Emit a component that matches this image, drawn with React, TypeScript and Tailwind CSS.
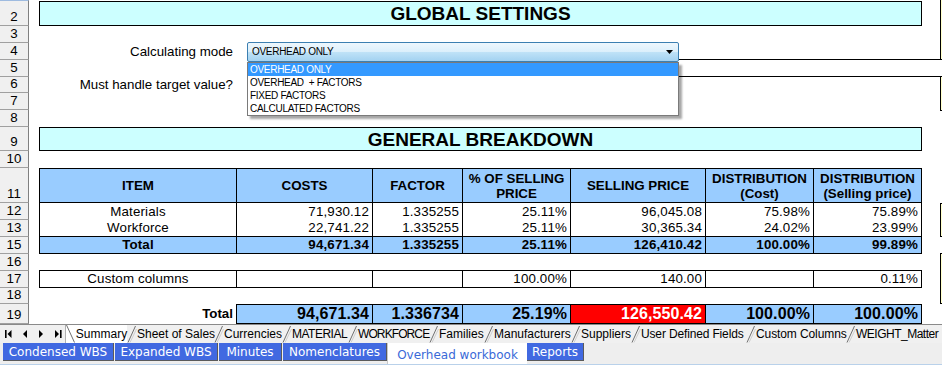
import React from "react";

const W = ["w-[197px]", "w-[136px]", "w-[90px]", "w-[108px]", "w-[135px]", "w-[108px]", "w-[109px]"];

function RowHead({ n, h, top }: { n: string; h: string; top?: boolean }) {
  return (
    <div
      className={`${h} w-[29px] shrink-0 bg-[#f0f0f0] border-r border-r-[#808080] border-b border-b-[#a0a0a0] ${
        top ? "border-t border-t-[#9ebbe0]" : ""
      } flex items-end justify-center pb-px text-[13.33px] leading-[14px]`}
    >
      {n}
    </div>
  );
}

function Row({ n, h, top, children }: { n: string; h: string; top?: boolean; children?: React.ReactNode }) {
  return (
    <div className={`flex ${h}`}>
      <RowHead n={n} h={h} top={top} />
      <div className="flex-1 flex min-w-0">{children}</div>
    </div>
  );
}

type CellProps = { i: number; children?: React.ReactNode; cls?: string; align?: "c" | "r" };

function Cell({ i, children, cls = "", align = "r" }: CellProps) {
  return (
    <div
      className={`${W[i]} shrink-0 h-full border-l border-black ${i === 6 ? "border-r" : ""} flex items-center ${
        align === "c" ? "justify-center text-center" : "justify-end pr-[3px]"
      } whitespace-nowrap ${cls}`}
    >
      {children}
    </div>
  );
}

const dataRows = [
  ["Materials", "71,930.12", "1.335255", "25.11%", "96,045.08", "75.98%", "75.89%"],
  ["Workforce", "22,741.22", "1.335255", "25.11%", "30,365.34", "24.02%", "23.99%"],
];

function Slash() {
  return (
    <svg width="10" height="18" viewBox="0 0 10 18" className="shrink-0">
      <path d="M1 17.5 L8.5 1" stroke="#707070" strokeWidth="1" fill="none" />
      <path d="M3 17.5 L9.5 4" stroke="#cfcfcf" strokeWidth="1" fill="none" />
    </svg>
  );
}

const sheetTabs: { t: string; w: string; c?: string }[] = [
  { t: "Sheet of Sales", w: "w-[77px]" },
  { t: "Currencies", w: "w-[58px]" },
  { t: "MATERIAL", w: "w-[56px]", c: "tracking-[-0.5px]" },
  { t: "WORKFORCE", w: "w-[71px]", c: "tracking-[-0.9px]" },
  { t: "Families", w: "w-[45px]" },
  { t: "Manufacturers", w: "w-[77px]" },
  { t: "Suppliers", w: "w-[50px]" },
  { t: "User Defined Fields", w: "w-[105px]", c: "tracking-[-0.15px]" },
  { t: "Custom Columns", w: "w-[90px]", c: "tracking-[-0.1px]" },
  { t: "WEIGHT_Matter", w: "w-[100px]", c: "tracking-[-0.5px]" },
];

function BlueTab({ t, w }: { t: string; w: string }) {
  return (
    <div
      className={`${w} shrink-0 h-[18px] bg-[#4169e1] text-white border-r border-b border-[#5a5a5a] flex items-center justify-center text-[12px] leading-none font-['DejaVu_Sans',Verdana,sans-serif]`}
    >
      {t}
    </div>
  );
}

export default function App() {
  return (
    <div className="w-[942px] h-[365px] overflow-hidden bg-white text-black font-['Liberation_Sans',Arial,sans-serif] relative">
      <div className="relative">
        <Row n="2" h="h-[26px]" top>
          <div className="ml-[10px] mt-px h-[25px] w-[883px] border border-black bg-[#ccffff] flex items-center justify-center font-bold text-[19px] leading-none">
            GLOBAL SETTINGS
          </div>
        </Row>
        <Row n="3" h="h-[17px]" />
        <Row n="4" h="h-[17px]">
          <div className="w-[204px] text-right text-[13.33px] leading-[17px]">Calculating mode</div>
        </Row>
        <Row n="5" h="h-[17px]">
          <div className="ml-[218px] -mt-px h-[18px] flex-1 border-y border-black" />
        </Row>
        <Row n="6" h="h-[16px]">
          <div className="w-[204px] text-right text-[13.33px] leading-[16px]">Must handle target value?</div>
        </Row>
        <Row n="7" h="h-[17px]" />
        <Row n="8" h="h-[17px]" />
        <Row n="9" h="h-[24px]">
          <div className="ml-[10px] h-[24px] w-[883px] border border-black bg-[#ccffff] flex items-center justify-center font-bold text-[19px] leading-none">
            GENERAL BREAKDOWN
          </div>
        </Row>
        <Row n="10" h="h-[17px]" />
        <Row n="11" h="h-[35px]">
          <div className="ml-[10px] flex h-full border-y border-black bg-[#99ccff] font-bold text-[13.33px] leading-[15px]">
            <Cell i={0} align="c">ITEM</Cell>
            <Cell i={1} align="c">COSTS</Cell>
            <Cell i={2} align="c">FACTOR</Cell>
            <Cell i={3} align="c">
              % OF SELLING
              <br />
              PRICE
            </Cell>
            <Cell i={4} align="c">SELLING PRICE</Cell>
            <Cell i={5} align="c">
              DISTRIBUTION
              <br />
              (Cost)
            </Cell>
            <Cell i={6} align="c">
              DISTRIBUTION
              <br />
              (Selling price)
            </Cell>
          </div>
        </Row>
        {dataRows.map((r, ri) => (
          <Row key={r[0]} n={ri === 0 ? "12" : "13"} h="h-[17px]">
            <div
              className={`ml-[10px] flex h-full text-[13.33px] leading-none tracking-[0.15px] ${
                ri === 1 ? "border-b border-black" : ""
              }`}
            >
              {r.map((v, i) => (
                <Cell key={i} i={i} align={i === 0 ? "c" : "r"}>
                  {v}
                </Cell>
              ))}
            </div>
          </Row>
        ))}
        <Row n="15" h="h-[17px]">
          <div className="ml-[10px] flex h-full border-b border-black bg-[#99ccff] font-bold text-[13.33px] leading-none tracking-[0.15px]">
            {["Total", "94,671.34", "1.335255", "25.11%", "126,410.42", "100.00%", "99.89%"].map((v, i) => (
              <Cell key={i} i={i} align={i === 0 ? "c" : "r"}>
                {v}
              </Cell>
            ))}
          </div>
        </Row>
        <Row n="16" h="h-[17px]" />
        <Row n="17" h="h-[17px]">
          <div className="ml-[10px] -mt-px h-[18px] flex border-y border-black text-[13.33px] leading-none tracking-[0.15px]">
            {["Custom columns", "", "", "100.00%", "140.00", "", "0.11%"].map((v, i) => (
              <Cell key={i} i={i} align={i === 0 ? "c" : "r"}>
                {v}
              </Cell>
            ))}
          </div>
        </Row>
        <Row n="18" h="h-[16px]" />
        <Row n="19" h="h-[20px]">
          <div className="w-[207px] shrink-0 flex items-center justify-end pr-[3px] font-bold text-[13.33px] leading-none">
            Total
          </div>
          <div className="flex h-full border-y border-black font-bold text-[16px] leading-none tracking-[0.1px]">
            {["94,671.34", "1.336734", "25.19%", "126,550.42", "100.00%", "100.00%"].map((v, j) => (
              <Cell key={j} i={j + 1} cls={j === 3 ? "bg-[#ff0000] text-white" : "bg-[#99ccff]"}>
                {v}
              </Cell>
            ))}
          </div>
        </Row>

        {/* comment boxes at right edge */}
        <div className="absolute left-[940px] -top-px h-[61px] w-[20px] border border-black bg-[#ffffc8]" />
        <div className="absolute left-[940px] top-[76px] h-[35px] w-[20px] border border-black bg-[#ffffc8]" />
        <div className="absolute left-[940px] top-[203px] h-[34px] w-[20px] border border-black bg-[#ffffc8]" />
        <div className="absolute left-[940px] top-[253px] h-[51px] w-[20px] border border-black bg-[#ffffc8]" />

        {/* dropdown */}
        <div className="absolute left-[247px] top-[42px] w-[432px] text-[10px] leading-none">
          <div className="relative h-[20px] border border-[#3c7fb1] rounded-[2px] bg-[linear-gradient(to_bottom,#eef7fd_0%,#dbeffb_50%,#bfe2f7_52%,#a3d2f1_100%)] flex items-center pl-[4px]">
            <span className="tracking-[-0.3px]">OVERHEAD ONLY</span>
            <svg className="absolute right-[5px] top-[7px]" width="7" height="4" viewBox="0 0 7 4">
              <path d="M0 0H7L3.5 4Z" fill="#000" />
            </svg>
          </div>
          <div className="h-[54px] border border-[#7a7a7a] bg-white shadow-[3px_3px_2px_rgba(0,0,0,0.35)] flex flex-col tracking-[-0.3px]">
            <div className="h-[13px] bg-[#3399ff] text-white flex items-center pl-[2px]">OVERHEAD ONLY</div>
            <div className="h-[13px] flex items-center pl-[2px] whitespace-pre">OVERHEAD  + FACTORS</div>
            <div className="h-[13px] flex items-center pl-[2px]">FIXED FACTORS</div>
            <div className="h-[13px] flex items-center pl-[2px]">CALCULATED FACTORS</div>
          </div>
        </div>
      </div>

      {/* sheet tabs bar */}
      <div className="h-[19px] flex bg-[#f0f0f0] border-t border-[#8a8a8a] text-[12px] leading-none whitespace-nowrap">
        <div className="w-[66px] shrink-0 h-full flex items-center border-r border-[#b0b0b0]">
          <svg className="ml-[5px]" width="7" height="8" viewBox="0 0 7 8">
            <path d="M0 0H1.6V8H0Z M6.5 0V8L2.5 4Z" fill="#000" />
          </svg>
          <svg className="ml-[11px]" width="4" height="8" viewBox="0 0 4 8">
            <path d="M4 0V8L0 4Z" fill="#000" />
          </svg>
          <svg className="ml-[12px]" width="4" height="8" viewBox="0 0 4 8">
            <path d="M0 0V8L4 4Z" fill="#000" />
          </svg>
          <svg className="ml-[12px]" width="7" height="8" viewBox="0 0 7 8">
            <path d="M0 0V8L4 4Z M5 0H6.6V8H5Z" fill="#000" />
          </svg>
        </div>
        <div className="flex h-full bg-white">
          <svg width="10" height="18" viewBox="0 0 10 18" className="shrink-0">
            <path d="M0.5 0 L8.5 17.5" stroke="#707070" strokeWidth="1" fill="none" />
          </svg>
          <div className="w-[51px] shrink-0 flex items-center justify-center">Summary</div>
        </div>
        {sheetTabs.map((s) => (
          <React.Fragment key={s.t}>
            <Slash />
            <div className={`${s.w} shrink-0 flex items-center ${s.c ?? ""}`}>{s.t}</div>
          </React.Fragment>
        ))}
      </div>

      {/* workbook tabs */}
      <div className="h-[22px] flex bg-[#eeeeee] border-b border-[#b9d1ea]">
        <div className="w-[3px] shrink-0" />
        <BlueTab t="Condensed WBS" w="w-[111px]" />
        <div className="w-[1px] shrink-0" />
        <BlueTab t="Expanded WBS" w="w-[103px]" />
        <div className="w-[1px] shrink-0" />
        <BlueTab t="Minutes" w="w-[63px]" />
        <div className="w-[1px] shrink-0" />
        <BlueTab t="Nomenclatures" w="w-[104px]" />
        <div className="w-[140px] shrink-0 h-full bg-white border-l border-[#c8c8c8] flex items-center justify-center text-[12px] leading-none text-[#3a6ad8] font-['DejaVu_Sans',Verdana,sans-serif] pt-[2px]">
          Overhead workbook
        </div>
        <BlueTab t="Reports" w="w-[57px]" />
      </div>
    </div>
  );
}
